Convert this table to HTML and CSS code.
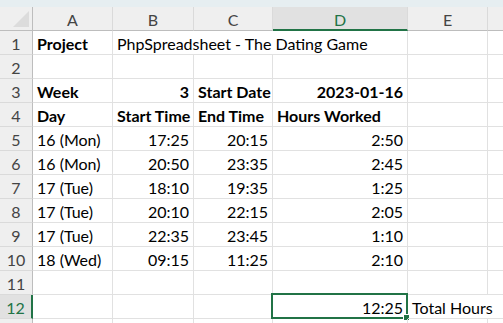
FILE: index.html
```html
<!DOCTYPE html>
<html lang="en">
  <head>
    <meta charset="UTF-8" />
    <title>The Dating Game</title>
    <link rel="stylesheet" href="styles.css">
  </head>
  <body>
    <div class="ribbon-edge"></div>
    <div class="sheet">
      <!-- column headers -->
      <div class="hd corner"><span class="tri"></span></div>
      <div class="hd col">A</div>
      <div class="hd col">B</div>
      <div class="hd col">C</div>
      <div class="hd col active-col">D</div>
      <div class="hd col">E</div>
      <div class="hd col"></div>

      <!-- 1 -->
      <div class="hd row">1</div>
      <div class="c b">Project</div>
      <div class="c span3">PhpSpreadsheet - The Dating Game</div>
      <div class="c"></div>
      <div class="c"></div>

      <!-- 2 -->
      <div class="hd row">2</div>
      <div class="c"></div><div class="c"></div><div class="c"></div><div class="c"></div><div class="c"></div><div class="c"></div>

      <!-- 3 -->
      <div class="hd row">3</div>
      <div class="c b">Week</div>
      <div class="c b r">3</div>
      <div class="c b">Start Date</div>
      <div class="c b r">2023-01-16</div>
      <div class="c"></div><div class="c"></div>

      <!-- 4 -->
      <div class="hd row">4</div>
      <div class="c b">Day</div>
      <div class="c b">Start Time</div>
      <div class="c b">End Time</div>
      <div class="c b">Hours Worked</div>
      <div class="c"></div><div class="c"></div>

      <!-- 5 -->
      <div class="hd row">5</div>
      <div class="c">16 (Mon)</div>
      <div class="c r">17:25</div>
      <div class="c r">20:15</div>
      <div class="c r">2:50</div>
      <div class="c"></div><div class="c"></div>

      <!-- 6 -->
      <div class="hd row">6</div>
      <div class="c">16 (Mon)</div>
      <div class="c r">20:50</div>
      <div class="c r">23:35</div>
      <div class="c r">2:45</div>
      <div class="c"></div><div class="c"></div>

      <!-- 7 -->
      <div class="hd row">7</div>
      <div class="c">17 (Tue)</div>
      <div class="c r">18:10</div>
      <div class="c r">19:35</div>
      <div class="c r">1:25</div>
      <div class="c"></div><div class="c"></div>

      <!-- 8 -->
      <div class="hd row">8</div>
      <div class="c">17 (Tue)</div>
      <div class="c r">20:10</div>
      <div class="c r">22:15</div>
      <div class="c r">2:05</div>
      <div class="c"></div><div class="c"></div>

      <!-- 9 -->
      <div class="hd row">9</div>
      <div class="c">17 (Tue)</div>
      <div class="c r">22:35</div>
      <div class="c r">23:45</div>
      <div class="c r">1:10</div>
      <div class="c"></div><div class="c"></div>

      <!-- 10 -->
      <div class="hd row">10</div>
      <div class="c">18 (Wed)</div>
      <div class="c r">09:15</div>
      <div class="c r">11:25</div>
      <div class="c r">2:10</div>
      <div class="c"></div><div class="c"></div>

      <!-- 11 -->
      <div class="hd row">11</div>
      <div class="c"></div><div class="c"></div><div class="c"></div><div class="c"></div><div class="c"></div><div class="c"></div>

      <!-- 12 -->
      <div class="hd row active-row">12</div>
      <div class="c"></div>
      <div class="c"></div>
      <div class="c"></div>
      <div class="c r selected">12:25<span class="sel-box"><span class="handle"></span></span></div>
      <div class="c span2">Total Hours</div>

      <!-- 13 -->
      <div class="hd row"></div>
      <div class="c"></div><div class="c"></div><div class="c"></div><div class="c"></div><div class="c"></div><div class="c"></div>
    </div>
  </body>
</html>
```

FILE: styles.css
```css
body {
  margin: 0;
  background: #ffffff;
  font-family: "Lato", "Liberation Sans", sans-serif;
  overflow: hidden;
}

.ribbon-edge {
  height: 7px;
  background: #e6eef1;
}

.sheet {
  display: grid;
  grid-template-columns: 33px 80px 81px 79px 135px 80px 40px;
  grid-auto-rows: 24px;
  height: 316px;
  overflow: hidden;
}

.hd {
  box-sizing: border-box;
  background: #efefef;
  color: #444444;
  font-size: 16px;
  display: flex;
  align-items: center;
  justify-content: center;
  border-right: 1px solid #dadada;
  border-bottom: 1px solid #dadada;
}

.col {
  border-bottom: 1px solid #bdbdbd;
  padding-top: 1px;
}

.active-col {
  background: #e1e1e1;
  color: #217346;
  border-bottom: 2px solid #217346;
  padding-top: 2px;
}

.corner {
  position: relative;
  border-right: 1px solid #bdbdbd;
  border-bottom: 1px solid #bdbdbd;
}

.tri {
  position: absolute;
  right: 3px;
  bottom: 3px;
  width: 0;
  height: 0;
  border-left: 16px solid transparent;
  border-bottom: 16px solid #dcdcdc;
}

.row {
  border-right: 1px solid #bdbdbd;
  padding-top: 1px;
}

.active-row {
  background: #e1e1e1;
  color: #217346;
  border-right: 2px solid #217346;
}

.c {
  box-sizing: border-box;
  position: relative;
  border-right: 1px solid #e1e1e1;
  border-bottom: 1px solid #e1e1e1;
  font-size: 16px;
  color: #000000;
  padding: 1px 4px 0 4px;
  display: flex;
  align-items: center;
  white-space: nowrap;
}

.b {
  font-weight: bold;
}

.r {
  justify-content: flex-end;
}

.span3 {
  grid-column: span 3;
}

.span2 {
  grid-column: span 2;
}

.sel-box {
  position: absolute;
  top: -2px;
  left: -2px;
  right: -1px;
  bottom: -1px;
  border: 2px solid #217346;
}

.handle {
  position: absolute;
  right: -4px;
  bottom: -4px;
  width: 5px;
  height: 5px;
  background: #217346;
  border: 1px solid #ffffff;
}
```
